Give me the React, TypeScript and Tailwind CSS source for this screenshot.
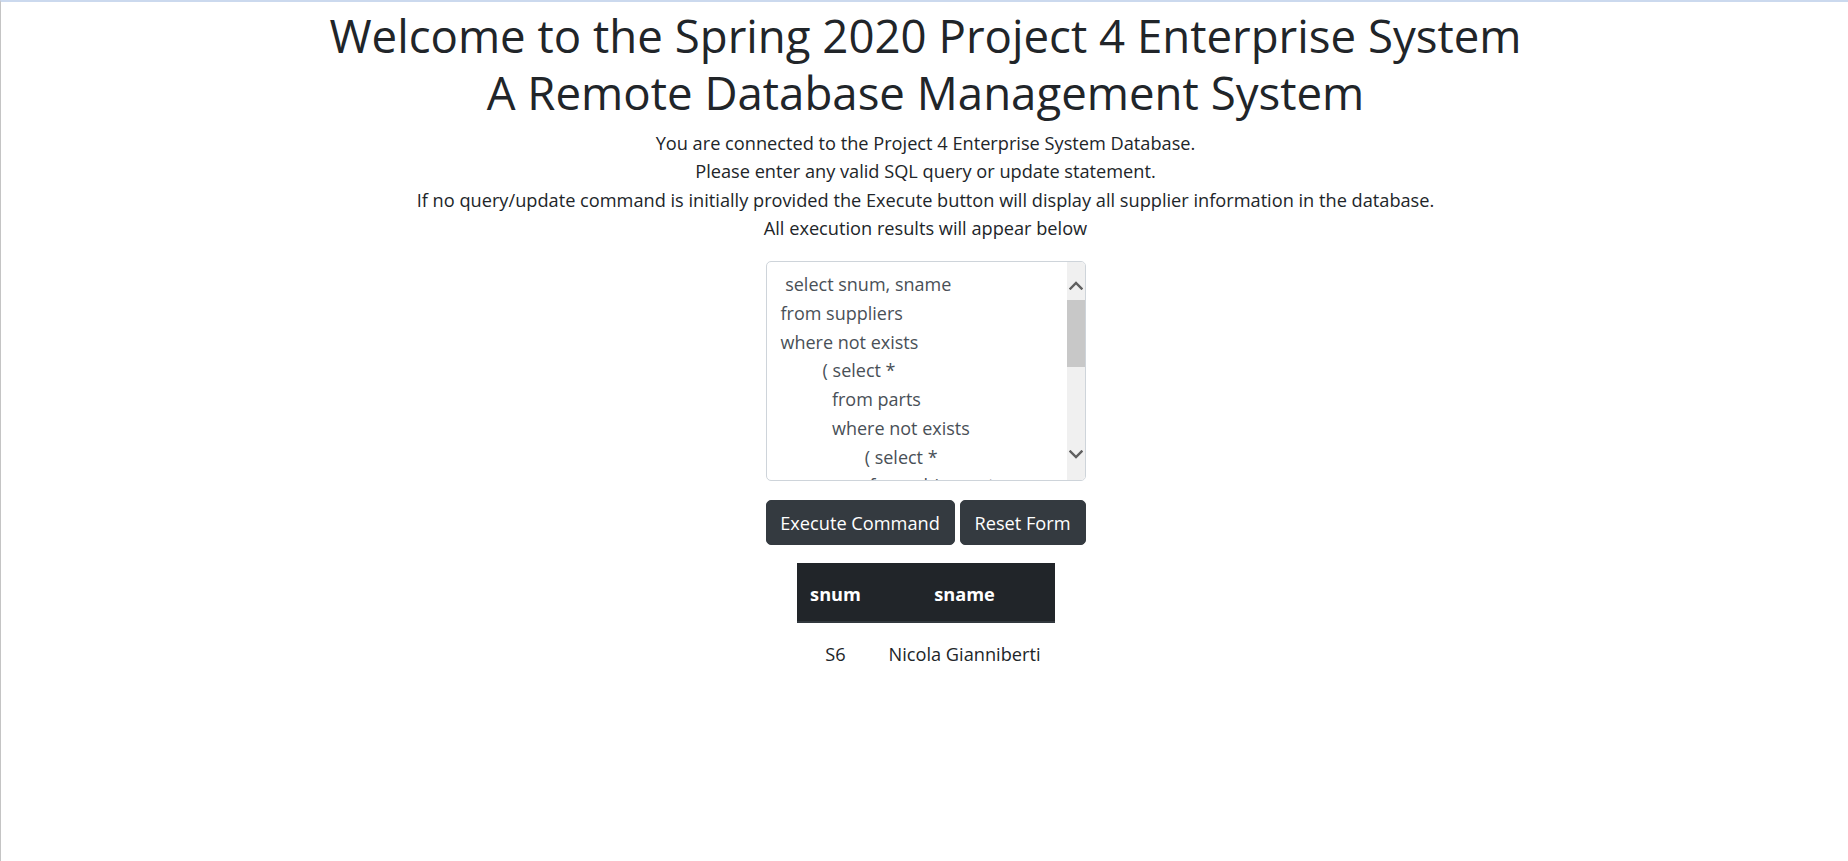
// ─── Data ─────────────────────────────────────────────────────────────────────

const QUERY = [
  " select snum, sname",
  "from suppliers",
  "where not exists",
  "         ( select *",
  "           from parts",
  "           where not exists",
  "                  ( select *",
  "                   from shipments",
  "                   where shipments.snum = suppliers.snum",
  "                   and shipments.pnum = parts.pnum ) )",
].join("\n");

const ROWS = [{ snum: "S6", sname: "Nicola Gianniberti" }];

// ─── Fake scrollbar (matches the native Windows one in the screenshot) ──────

function Chevron({ down = false }: { down?: boolean }) {
  return (
    <svg width="14" height="9" viewBox="0 0 14 9" fill="none">
      <polyline
        points={down ? "1.5,1.5 7,7 12.5,1.5" : "1.5,7.5 7,2 12.5,7.5"}
        stroke="#606060"
        strokeWidth="2.4"
        strokeLinecap="square"
      />
    </svg>
  );
}

function ScrollBar() {
  return (
    <div className="w-[18px] bg-[#f0f0f0] flex flex-col">
      <div className="h-[38px] flex justify-center items-start pt-[19px]">
        <Chevron />
      </div>
      <div className="h-[67px] bg-[#c8c8c8]" />
      <div className="flex-1" />
      <div className="h-[38px] flex justify-center items-start pt-[8px]">
        <Chevron down />
      </div>
    </div>
  );
}

// ─── App ──────────────────────────────────────────────────────────────────────

export default function App() {
  return (
    <div className="h-screen bg-white border-t-2 border-l border-t-[#cbd9ee] border-l-[#c4c4c4] text-[#212529] font-['Segoe_UI','Open_Sans',sans-serif] overflow-hidden">
      <div className="flex flex-col items-center pl-[2px]">
        <h1 className="mt-[5px] text-center text-[45.6px] leading-[56.6px] font-normal">
          Welcome to the Spring 2020 Project 4 Enterprise System
          <br />A Remote Database Management System
        </h1>

        <div className="mt-[9px] text-center text-[18.2px] leading-[28.3px]">
          <p>You are connected to the Project 4 Enterprise System Database.</p>
          <p>Please enter any valid SQL query or update statement.</p>
          <p>
            If no query/update command is initially provided the Execute button will display all
            supplier information in the database.
          </p>
          <p>All execution results will appear below</p>
        </div>

        <form className="mt-[19px] flex flex-col items-center">
          <div className="w-[320px] h-[220px] flex border border-[#ced4da] rounded-[5px] overflow-hidden bg-white">
            <textarea
              defaultValue={QUERY}
              spellCheck={false}
              className="flex-1 min-w-0 resize-none overflow-hidden whitespace-pre pl-[14px] pr-1 pt-[8px] text-[18px] leading-[28.7px] text-[#495057] outline-none font-['Segoe_UI','Open_Sans',sans-serif]"
            />
            <ScrollBar />
          </div>

          <div className="mt-[19px] flex gap-[5px]">
            <button
              type="button"
              className="w-[189px] h-[45px] rounded-[5px] bg-[#343a40] border border-[#343a40] text-white text-[18.2px] leading-[28.3px]"
            >
              Execute Command
            </button>
            <button
              type="reset"
              className="w-[126px] h-[45px] rounded-[5px] bg-[#343a40] border border-[#343a40] text-white text-[18.2px] leading-[28.3px]"
            >
              Reset Form
            </button>
          </div>
        </form>

        <table className="mt-[18px] border-collapse text-[18.2px] leading-[28.3px]">
          <thead>
            <tr className="bg-[#212529] text-white">
              <th className="w-[78px] px-[12px] pt-[17px] pb-[12px] border-b-2 border-[#32383e] font-bold text-center">
                snum
              </th>
              <th className="w-[180px] px-[12px] pt-[17px] pb-[12px] border-b-2 border-[#32383e] font-bold text-center">
                sname
              </th>
            </tr>
          </thead>
          <tbody>
            {ROWS.map((r) => (
              <tr key={r.snum}>
                <td className="px-[12px] pt-[17px] pb-[12px] text-center">{r.snum}</td>
                <td className="px-[12px] pt-[17px] pb-[12px] text-center">{r.sname}</td>
              </tr>
            ))}
          </tbody>
        </table>
      </div>
    </div>
  );
}
